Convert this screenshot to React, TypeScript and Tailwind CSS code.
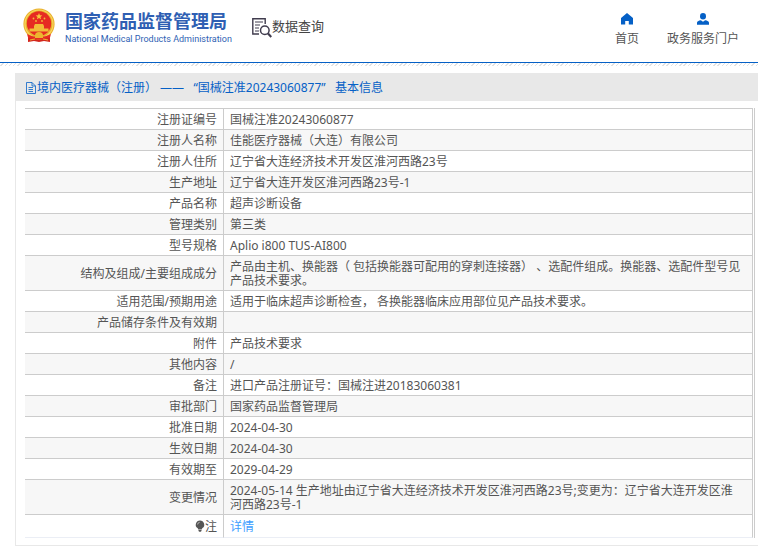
import React from "react";

type Row = { label: string; value: string };

const rows: Row[] = [
  { label: "注册证编号", value: "国械注准20243060877" },
  { label: "注册人名称", value: "佳能医疗器械（大连）有限公司" },
  { label: "注册人住所", value: "辽宁省大连经济技术开发区淮河西路23号" },
  { label: "生产地址", value: "辽宁省大连开发区淮河西路23号-1" },
  { label: "产品名称", value: "超声诊断设备" },
  { label: "管理类别", value: "第三类" },
  { label: "型号规格", value: "Aplio i800 TUS-AI800" },
  {
    label: "结构及组成/主要组成成分",
    value: "产品由主机、换能器（ 包括换能器可配用的穿刺连接器） 、选配件组成。换能器、选配件型号见产品技术要求。",
  },
  { label: "适用范围/预期用途", value: "适用于临床超声诊断检查， 各换能器临床应用部位见产品技术要求。" },
  { label: "产品储存条件及有效期", value: "" },
  { label: "附件", value: "产品技术要求" },
  { label: "其他内容", value: "/" },
  { label: "备注", value: "进口产品注册证号：国械注进20183060381" },
  { label: "审批部门", value: "国家药品监督管理局" },
  { label: "批准日期", value: "2024-04-30" },
  { label: "生效日期", value: "2024-04-30" },
  { label: "有效期至", value: "2029-04-29" },
  {
    label: "变更情况",
    value: "2024-05-14 生产地址由辽宁省大连经济技术开发区淮河西路23号;变更为：辽宁省大连开发区淮河西路23号-1",
  },
];

function Emblem() {
  return (
    <svg viewBox="0 0 32 35" className="h-[35px] w-8 shrink-0" aria-hidden="true">
      <path d="M5 25h22v9l-6-1-5 1-5-1-6 1z" fill="#d3261d" />
      <circle cx="16" cy="16" r="15.6" fill="#e9b02d" />
      <circle cx="16" cy="16" r="14" fill="none" stroke="#f8d65f" strokeWidth="1.2" />
      <circle cx="16" cy="15.5" r="12.2" fill="#e62a22" />
      <path d="M16 5l.9 2.300 2.400.1-1.900 1.500.7 2.400-2.100-1.400-2.100 1.400.7-2.400-1.900-1.500 2.400-.1z" fill="#f7c93c" />
      <g fill="#f2bb38">
        <circle cx="10.500" cy="10.500" r=".9" />
        <circle cx="13" cy="13" r=".9" />
        <circle cx="19" cy="13" r=".9" />
        <circle cx="21.500" cy="10.500" r=".9" />
        <path d="M12 16h8l1 2H11zM11 18h10v2.500H11zM6.500 20.500h19v3h-19z" />
      </g>
      <path d="M4 26c7 4 17 4 24 0l-1 3.500c-6 2.500-16 2.500-22 0z" fill="#e62a22" />
      <path d="M12 27.500a4 3.500 0 0 1 8 0v2.500h-8z" fill="#edb52f" />
      <path d="M7 32l5-1M25 32l-5-1" stroke="#edb52f" strokeWidth="1.200" />
    </svg>
  );
}

function QueryIcon() {
  return (
    <svg viewBox="0 0 20 20" className="h-5 w-5 shrink-0" fill="none" stroke="#403c4e" aria-hidden="true">
      <path d="M7 16H.8V.8h12.400V6" strokeWidth="1.400" />
      <path d="M3 4h8M3 7h5M3 10h4M3 13h4" strokeWidth="1" />
      <circle cx="12.800" cy="12.200" r="4.300" strokeWidth="1.500" />
      <path d="M16 15.500l3.300 3.500" strokeWidth="2.200" />
    </svg>
  );
}

function HomeIcon() {
  return (
    <svg viewBox="0 0 12 12" className="h-3 w-3" fill="#0560c6" aria-hidden="true">
      <path d="M6 0L12 5v6.500H7.800V8H4.200v3.500H0V5z" />
    </svg>
  );
}

function UserIcon() {
  return (
    <svg viewBox="0 0 12 12" className="h-3 w-3" fill="#0560c6" aria-hidden="true">
      <ellipse cx="6" cy="3.200" rx="3" ry="3.200" />
      <path d="M0 11.800V9.800C0 8.300 1.500 7.600 3.900 7.200L6 8.800l2.100-1.600C10.500 7.600 12 8.300 12 9.800v2z" />
    </svg>
  );
}

function FileIcon() {
  return (
    <svg viewBox="0 0 12 12" className="h-3 w-3 shrink-0" fill="none" stroke="#0560c6" strokeWidth=".8" aria-hidden="true">
      <path d="M1.500.5h5.500l3.500 3.500v7.500h-9zM7 .5V4h3.500M3.500 5.500h4.500M3.500 7.500h4.500M3.500 9.500h4.500" />
    </svg>
  );
}

function BulbIcon() {
  return (
    <svg viewBox="0 0 10 12" className="inline-block h-3 w-[10px] align-[-1px]" fill="#555" aria-hidden="true">
      <path d="M5 .5a4.200 4.200 0 0 0-2.500 7.600c.5.400.7 1 .7 1.400h3.600c0-.4.200-1 .7-1.400A4.200 4.200 0 0 0 5 .5zM3.500 10h3v1l-.8.800H4.300l-.8-.8z" />
      <path d="M2.600 4.500A2.300 2.300 0 0 1 4.700 2.300" fill="none" stroke="#ddd" strokeWidth=".7" />
    </svg>
  );
}

const labelCell = "border-r border-[#ccc] pt-1 pb-0.5 pr-1.5 text-right align-middle font-normal";
const valueCell = "border-r border-[#ccc] pt-1 pb-0.5 pr-2.5 pl-1.5 align-middle";

export default function App() {
  return (
    <div className="bg-white font-['Noto_Sans','Noto_Sans_CJK_SC',sans-serif] text-xs leading-[14px] text-[#555]">
      <header className="flex h-[63px] items-start justify-between border-b border-[#0560c6] pr-[19px] pl-[23px]">
        <div className="flex items-start">
          <a href="#" className="flex items-start gap-2.5 pt-2 text-[#2f5fb3]">
            <Emblem />
            <span className="flex flex-col pt-1">
              <span className="text-lg leading-[18px] font-bold whitespace-nowrap">国家药品监督管理局</span>
              <span className="pt-px font-['Roboto','Liberation_Sans',sans-serif] text-[9px] leading-4 whitespace-nowrap">
                National Medical Products Administration
              </span>
            </span>
          </a>
          <a href="#" className="ml-5 flex items-start pt-[18px] text-[#444]">
            <QueryIcon />
            <span className="text-[13px] leading-4 whitespace-nowrap">数据查询</span>
          </a>
        </div>
        <nav className="flex gap-7 pt-[13px] text-[#555]">
          <a href="#" className="flex flex-col items-center gap-[7px] whitespace-nowrap">
            <HomeIcon />
            <span>首页</span>
          </a>
          <a href="#" className="flex flex-col items-center gap-[7px] whitespace-nowrap">
            <UserIcon />
            <span>政务服务门户</span>
          </a>
        </nav>
      </header>
      <div className="h-[3px] bg-[repeating-linear-gradient(135deg,#fff_0px,#fff_2px,#e2e2e2_2px,#e2e2e2_3px)]" />

      <main className="mt-[7px] ml-[15px] border-b border-l border-[#e8e8e8]">
        <h1 className="flex h-7 items-center bg-[#e8e8e8] pt-0.5 pl-[9px] text-[#0560c6]">
          <FileIcon />
          <span className="whitespace-pre">
            {"境内医疗器械（注册） ——   “国械注准20243060877”   基本信息"}
          </span>
        </h1>
        <div className="pt-[7px] pr-[3px] pb-[7px] pl-[9px]">
          <div className="border-r border-[#ccc] pr-px">
            <table className="w-full table-fixed border-separate border-spacing-0 border-t border-[#ccc]">
              <colgroup>
                <col className="w-[199px]" />
                <col />
              </colgroup>
              <tbody>
                {rows.map((row) => (
                  <tr key={row.label} className="even:bg-[#f7f7f7]">
                    <th scope="row" className={`${labelCell} border-b`}>{row.label}</th>
                    <td className={`${valueCell} border-b`}>{row.value}</td>
                  </tr>
                ))}
                <tr className="h-[23px]">
                  <th scope="row" className={`${labelCell} border-b border-b-[#ebeef5]`}>
                    <BulbIcon />
                    注
                  </th>
                  <td className={`${valueCell} border-b border-b-[#ebeef5]`}>
                    <a href="#" className="text-[#409eff]">详情</a>
                  </td>
                </tr>
              </tbody>
            </table>
          </div>
        </div>
      </main>
    </div>
  );
}
